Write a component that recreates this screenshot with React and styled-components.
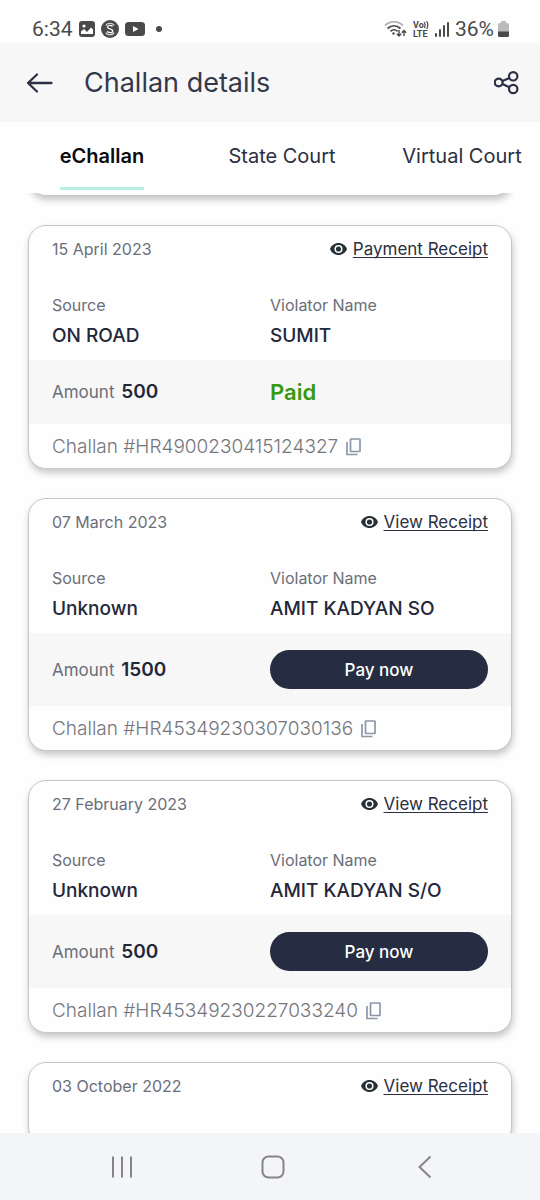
import React from 'react';
import styled, { createGlobalStyle } from 'styled-components';

const GlobalStyle = createGlobalStyle`
  * {
    box-sizing: border-box;
  }

  body {
    margin: 0;
    background: #fefefe;
    color: #23273a;
    font-family: Inter, 'Liberation Sans', sans-serif;
  }

  button {
    padding: 0;
    border: 0;
    background: none;
    color: inherit;
    font: inherit;
    cursor: pointer;
  }

  svg {
    display: block;
    flex: none;
  }
`;

const Screen = styled.div`
  display: flex;
  flex-direction: column;
  height: 100vh;
`;

const StatusBar = styled.div`
  display: flex;
  justify-content: space-between;
  align-items: center;
  padding: 17px 31px 2px 32px;
  color: #4a4a4a;
  font-family: Roboto, sans-serif;
  font-size: 21px;
  line-height: 24px;
`;

const StatusGroup = styled.div`
  display: flex;
  align-items: center;
  gap: ${({ $gap }) => $gap}px;
`;

const Header = styled.header`
  display: flex;
  align-items: center;
  padding: 20px 20px 19px 26px;
  background: #f7f7f7;
`;

const Title = styled.h1`
  flex: 1;
  margin: 0 0 0 30px;
  color: #34384b;
  font-size: 27px;
  font-weight: 400;
  line-height: 40px;
`;

const Tabs = styled.nav`
  display: flex;
  padding: 0 0 3px 12px;
  overflow: hidden;
`;

const TabItem = styled.div`
  display: flex;
  flex: 0 0 auto;
  justify-content: center;
  width: 180px;
`;

const Tab = styled.button`
  padding: 22px 0 18px;
  border-bottom: 3px solid ${({ $active }) => ($active ? '#b5efe1' : 'transparent')};
  color: ${({ $active }) => ($active ? '#0b0b0f' : '#2b2f3f')};
  font-size: 20px;
  font-weight: ${({ $active }) => ($active ? 600 : 400)};
  line-height: 25px;
  white-space: nowrap;
`;

const List = styled.main`
  display: flex;
  flex: 1;
  flex-direction: column;
  gap: 29px;
  min-height: 0;
  padding: 0 28px;
  overflow: hidden auto;
  scrollbar-width: none;
`;

const Card = styled.article`
  flex: none;
  overflow: hidden;
  border: 1px solid #c6c6c6;
  border-radius: 18px;
  background: #fefefe;
  box-shadow: 1px 4px 7px rgba(0, 0, 0, 0.22);
`;

const PreviousCard = styled(Card)`
  height: 44px;
  margin-top: -41px;
`;

const Details = styled.div`
  padding: 13px 23px 12px;
`;

const DetailsTop = styled.div`
  display: flex;
  justify-content: space-between;
  align-items: center;
  margin-bottom: 36px;
  font-size: 16px;
  line-height: 20px;
`;

const DateText = styled.time`
  color: #6a6e79;
`;

const ReceiptLink = styled.a`
  display: flex;
  align-items: center;
  gap: 6px;
  color: #2b2f3f;
  font-size: 17px;
  text-decoration: none;

  span {
    text-decoration: underline;
    text-decoration-thickness: 1px;
    text-underline-offset: 2px;
    text-decoration-skip-ink: none;
  }
`;

const Columns = styled.dl`
  display: grid;
  grid-template-columns: 1fr 1fr;
  margin: 0;
`;

const Label = styled.dt`
  margin-bottom: 9px;
  color: #6a6e79;
  font-size: 16px;
  line-height: 20px;
`;

const Value = styled.dd`
  margin: 0;
  font-size: 19px;
  font-weight: 500;
  line-height: 24px;
  white-space: nowrap;
`;

const AmountBand = styled.div`
  display: grid;
  grid-template-columns: 1fr 1fr;
  align-items: center;
  padding: 17px 23px;
  background: #f7f7f7;
`;

const Amount = styled.div`
  color: #6a6e79;
  font-size: 17px;
  line-height: 24px;

  strong {
    margin-left: 2px;
    color: #23273a;
    font-size: 19px;
    font-weight: 600;
  }
`;

const Paid = styled.div`
  color: #37990f;
  font-size: 22px;
  font-weight: 600;
  line-height: 30px;
`;

const PayButton = styled.button`
  height: 39px;
  border-radius: 20px;
  background: #262c41;
  color: #fff;
  font-size: 17px;
  font-weight: 500;
`;

const Footer = styled.div`
  display: flex;
  align-items: center;
  gap: 8px;
  padding: 11px 23px 9px;
  color: #74767c;
  font-size: 19px;
  font-weight: 300;
  line-height: 24px;
  white-space: nowrap;
`;

const SystemNav = styled.nav`
  display: flex;
  justify-content: space-between;
  align-items: center;
  padding: 22px 107px 21px 110px;
  background: #f4f5f8;
`;

const PictureIcon = () => (
  <svg width="16" height="16" viewBox="0 0 16 16" aria-hidden="true">
    <rect width="16" height="16" rx="3" fill="#4a4a4a" />
    <circle cx="5" cy="5" r="1.6" fill="#fff" />
    <path d="M2 13V10.5L5 8l3 3 4-4.5 2 2V13Z" fill="#fff" />
  </svg>
);

const CoinIcon = () => (
  <svg width="18" height="18" viewBox="0 0 18 18" fill="none" aria-hidden="true">
    <circle cx="9" cy="9" r="9" fill="#4a4a4a" />
    <path d="M5 5.5C6 2.5 12 2.5 13 5.5M13 12.5c-1 3-7 3-8 0" stroke="#ddd" strokeWidth="1.2" />
    <path d="M11.5 6.5C10.5 5 6.5 5 6.5 7.2S11.7 8.500 11.7 11 7.500 13 6.300 11.300" stroke="#fff" strokeWidth="1.3" />
  </svg>
);

const VideoIcon = () => (
  <svg width="20" height="14" viewBox="0 0 20 14" aria-hidden="true">
    <rect width="20" height="14" rx="3.5" fill="#4a4a4a" />
    <path d="m8 4 5.5 3L8 10Z" fill="#fff" />
  </svg>
);

const DotIcon = () => (
  <svg width="6" height="6" viewBox="0 0 6 6" aria-hidden="true">
    <circle cx="3" cy="3" r="3" fill="#4a4a4a" />
  </svg>
);

const WifiIcon = () => (
  <svg width="23" height="18" viewBox="0 0 23 18" fill="none" strokeWidth="1.7" aria-hidden="true">
    <path d="M1 5.5C6 .5 14 .5 19 5.5" stroke="#aaa" />
    <path d="M3.5 8.5c4-3.5 9-3.5 13 0M6.5 11.3c2-2 5-2 7 0" stroke="#4a4a4a" />
    <circle cx="9.5" cy="13.5" r="1.2" fill="#4a4a4a" />
    <path d="M15 10v6M12.8 13.8 15 16l2.2-2.2M20 16v-5.5M17.8 12.7 20 10.5l2.2 2.2" stroke="#4a4a4a" strokeWidth="1.4" />
  </svg>
);

const VolteIcon = () => (
  <svg width="16" height="18" viewBox="0 0 16 18" fill="#4a4a4a" aria-hidden="true">
    <text x="0" y="8" fontFamily="Roboto, sans-serif" fontSize="9" fontWeight="700">Vo</text>
    <text x="0" y="17" fontFamily="Roboto, sans-serif" fontSize="9" fontWeight="700">LTE</text>
    <path d="M11.3 2q1.5 3 0 6M13.7 1q2.2 4 0 8" fill="none" stroke="#4a4a4a" strokeWidth="1.2" />
  </svg>
);

const SignalIcon = () => (
  <svg width="14" height="15" viewBox="0 0 14 15" fill="#4a4a4a" aria-hidden="true">
    <rect y="11" width="2" height="4" rx="1" />
    <rect x="4" y="7" width="2" height="8" rx="1" />
    <rect x="8" y="3" width="2" height="12" rx="1" />
    <rect x="12" width="2" height="15" rx="1" />
  </svg>
);

const BatteryIcon = () => (
  <svg width="11" height="16" viewBox="0 0 11 16" aria-hidden="true">
    <path d="M3 0h5v2h1.5Q11 2 11 3.5V11H0V3.5Q0 2 1.5 2H3Z" fill="#bbb" />
    <path d="M0 10.5h11v4Q11 16 9.5 16h-8Q0 16 0 14.5Z" fill="#4a4a4a" />
  </svg>
);

const BackArrowIcon = () => (
  <svg width="28" height="22" viewBox="0 0 28 22" fill="none" stroke="#2b3045" strokeWidth="2.3" strokeLinecap="round" strokeLinejoin="round" aria-hidden="true">
    <path d="M25.500 11H2M11 2.500 2 11l9 8.500" />
  </svg>
);

const ShareIcon = () => (
  <svg width="26" height="24" viewBox="0 0 26 24" fill="none" stroke="#2b3045" strokeWidth="2.2" aria-hidden="true">
    <circle cx="4.700" cy="11.500" r="3.900" />
    <circle cx="19.200" cy="5.300" r="4.200" />
    <circle cx="19.200" cy="18" r="4.200" />
    <path d="m8.400 10 7-3M8.400 13l7 3.200" />
  </svg>
);

const EyeIcon = () => (
  <svg width="17" height="12" viewBox="0 0 17 12" aria-hidden="true">
    <path d="M8.5 0C4.6 0 1.3 2.5 0 6c1.3 3.5 4.6 6 8.5 6S15.7 9.500 17 6C15.700 2.500 12.400 0 8.500 0Z" fill="#263238" />
    <circle cx="8.5" cy="6" r="3.3" fill="#263238" stroke="#fff" strokeWidth="1.5" />
  </svg>
);

const CopyIcon = () => (
  <svg width="15" height="18" viewBox="0 0 15 18" fill="none" stroke="#8b98a9" strokeWidth="1.7" aria-hidden="true">
    <rect x="4.5" y="1" width="9.5" height="12.5" rx=".5" />
    <path d="M1 4v12.500h10.500" />
  </svg>
);

const RecentsIcon = () => (
  <svg width="24" height="24" viewBox="0 0 24 24" stroke="#858589" strokeWidth="2" aria-hidden="true">
    <path d="M3 1.5v21M12 1.5v21M21 1.5v21" />
  </svg>
);

const HomeIcon = () => (
  <svg width="24" height="24" viewBox="0 0 24 24" fill="none" stroke="#858589" strokeWidth="2" aria-hidden="true">
    <rect x="1.5" y="1.5" width="21" height="21" rx="6" />
  </svg>
);

const NavBackIcon = () => (
  <svg width="22" height="24" viewBox="0 0 22 24" fill="none" stroke="#858589" strokeWidth="2" aria-hidden="true">
    <path d="M19.500 1.500 8.500 12l11 10.500" />
  </svg>
);

const tabs = ['eChallan', 'State Court', 'Virtual Court'];

const challans = [
  { date: '15 April 2023', receipt: 'Payment Receipt', source: 'ON ROAD', violator: 'SUMIT', amount: 500, paid: true, number: 'HR4900230415124327' },
  { date: '07 March 2023', receipt: 'View Receipt', source: 'Unknown', violator: 'AMIT KADYAN SO', amount: 1500, number: 'HR45349230307030136' },
  { date: '27 February 2023', receipt: 'View Receipt', source: 'Unknown', violator: 'AMIT KADYAN S/O', amount: 500, number: 'HR45349230227033240' },
];

const CardTop = ({ date, receipt }) => (
  <DetailsTop>
    <DateText>{date}</DateText>
    <ReceiptLink href="#receipt">
      <EyeIcon />
      <span>{receipt}</span>
    </ReceiptLink>
  </DetailsTop>
);

const ChallanCard = ({ challan }) => (
  <Card>
    <Details>
      <CardTop date={challan.date} receipt={challan.receipt} />
      <Columns>
        <div>
          <Label>Source</Label>
          <Value>{challan.source}</Value>
        </div>
        <div>
          <Label>Violator Name</Label>
          <Value>{challan.violator}</Value>
        </div>
      </Columns>
    </Details>
    <AmountBand>
      <Amount>
        Amount <strong>{challan.amount}</strong>
      </Amount>
      {challan.paid ? <Paid>Paid</Paid> : <PayButton type="button">Pay now</PayButton>}
    </AmountBand>
    <Footer>
      <span>Challan #{challan.number}</span>
      <button type="button" aria-label="Copy">
        <CopyIcon />
      </button>
    </Footer>
  </Card>
);

const App = () => {
  return (
    <>
      <GlobalStyle />
      <Screen>
        <StatusBar>
          <StatusGroup $gap={11}>
            <StatusGroup $gap={6}>
              <span>6:34</span>
              <PictureIcon />
              <CoinIcon />
              <VideoIcon />
            </StatusGroup>
            <DotIcon />
          </StatusGroup>
          <StatusGroup $gap={6}>
            <WifiIcon />
            <VolteIcon />
            <SignalIcon />
            <StatusGroup $gap={4}>
              <span>36%</span>
              <BatteryIcon />
            </StatusGroup>
          </StatusGroup>
        </StatusBar>
        <Header>
          <button type="button" aria-label="Back">
            <BackArrowIcon />
          </button>
          <Title>Challan details</Title>
          <button type="button" aria-label="Share">
            <ShareIcon />
          </button>
        </Header>
        <Tabs>
          {tabs.map((tab, index) => (
            <TabItem key={tab}>
              <Tab type="button" $active={index === 0}>{tab}</Tab>
            </TabItem>
          ))}
        </Tabs>
        <List>
          <PreviousCard />
          {challans.map((challan) => (
            <ChallanCard key={challan.number} challan={challan} />
          ))}
          <Card>
            <Details>
              <CardTop date="03 October 2022" receipt="View Receipt" />
            </Details>
          </Card>
        </List>
        <SystemNav>
          <button type="button" aria-label="Recents">
            <RecentsIcon />
          </button>
          <button type="button" aria-label="Home">
            <HomeIcon />
          </button>
          <button type="button" aria-label="Back">
            <NavBackIcon />
          </button>
        </SystemNav>
      </Screen>
    </>
  );
};

export default App;
